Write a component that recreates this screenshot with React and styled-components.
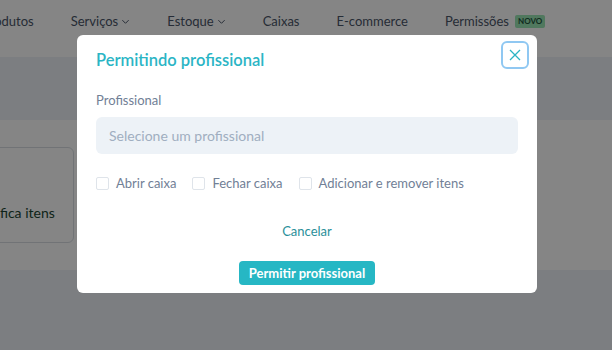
import React from 'react';
import styled, { createGlobalStyle } from 'styled-components';

const GlobalStyle = createGlobalStyle`
  html, body {
    margin: 0;
    padding: 0;
    height: 100%;
    overflow: hidden;
  }
  body {
    font-family: Lato, "Noto Sans", sans-serif;
    background: #ffffff;
  }
  #root {
    height: 100%;
  }
`;

const navItems = [
  { label: 'Produtos' },
  { label: 'Serviços', menu: true },
  { label: 'Estoque', menu: true },
  { label: 'Caixas' },
  { label: 'E-commerce' },
  { label: 'Permissões', badge: 'NOVO' },
];

const permissions = ['Abrir caixa', 'Fechar caixa', 'Adicionar e remover itens'];

export default function App() {
  return (
    <>
      <GlobalStyle />
      <Page>
        <Nav>
          <NavList>
            {navItems.map((item) => (
              <NavItem key={item.label}>
                {item.label}
                {item.menu && (
                  <svg width="9" height="9" viewBox="0 0 10 10" fill="none">
                    <path d="M1.5 3.5 5 7l3.5-3.5" stroke="currentColor" strokeWidth="1.1" />
                  </svg>
                )}
                {item.badge && <Badge>{item.badge}</Badge>}
              </NavItem>
            ))}
          </NavList>
        </Nav>
        <Band $height={63} />
        <Content>
          <Card>
            <CardText>Modifica itens</CardText>
          </Card>
        </Content>
        <Band $grow />
      </Page>

      <Overlay>
        <Modal>
          <Header>
            <Title>Permitindo profissional</Title>
            <CloseButton aria-label="Fechar">
              <svg width="12" height="12" viewBox="0 0 12 12" fill="none">
                <path d="M1 1l10 10M11 1 1 11" stroke="#2bb3c3" strokeWidth="1.3" />
              </svg>
            </CloseButton>
          </Header>

          <Label>Profissional</Label>
          <Select>Selecione um profissional</Select>

          <CheckRow>
            {permissions.map((p) => (
              <CheckItem key={p}>
                <Box />
                {p}
              </CheckItem>
            ))}
          </CheckRow>

          <Footer>
            <LinkButton>Cancelar</LinkButton>
            <PrimaryButton>Permitir profissional</PrimaryButton>
          </Footer>
        </Modal>
      </Overlay>
    </>
  );
}

const Page = styled.div`
  display: flex;
  flex-direction: column;
  height: 100%;
`;

const Nav = styled.nav`
  height: 57px;
  background: #ffffff;
  display: flex;
  align-items: flex-start;
  overflow: hidden;
`;

const NavList = styled.div`
  display: flex;
  gap: 37px;
  margin-left: -18px;
  padding-top: 12px;
`;

const NavItem = styled.div`
  display: flex;
  align-items: center;
  gap: 3px;
  font-size: 13px;
  color: #4a5568;
  white-space: nowrap;
  line-height: 18px;
`;

const Badge = styled.span`
  margin-left: 3px;
  background: #9ae6b4;
  color: #22543d;
  font-size: 8px;
  font-weight: 700;
  padding: 1px 3px;
  border-radius: 2px;
  line-height: 11px;
`;

const Band = styled.div`
  background: #edf2f7;
  height: ${(p) => (p.$height ? `${p.$height}px` : 'auto')};
  flex: ${(p) => (p.$grow ? 1 : 'none')};
`;

const Content = styled.div`
  height: 150px;
  background: #ffffff;
  padding-top: 27px;
  box-sizing: border-box;
`;

const Card = styled.div`
  margin-left: -60px;
  width: 134px;
  height: 96px;
  box-sizing: border-box;
  border: 1px solid #d9dde3;
  border-radius: 6px;
  display: flex;
  align-items: flex-end;
  padding: 0 0 21px 27px;
`;

const CardText = styled.span`
  font-size: 14px;
  color: #1c4532;
  white-space: nowrap;
`;

const Overlay = styled.div`
  position: fixed;
  inset: 0;
  background: rgba(0, 0, 0, 0.48);
  display: flex;
  justify-content: center;
  align-items: flex-start;
  padding: 35px 0 0 2px;
`;

const Modal = styled.div`
  width: 460px;
  box-sizing: border-box;
  background: #ffffff;
  border-radius: 6px;
  padding: 6px 8px 8px 19px;
  display: flex;
  flex-direction: column;
`;

const Header = styled.div`
  display: flex;
  justify-content: space-between;
  align-items: flex-start;
`;

const Title = styled.h2`
  margin: 7px 0 0;
  font-size: 16.5px;
  line-height: 24px;
  font-weight: 600;
  color: #2bb5c5;
`;

const CloseButton = styled.button`
  width: 28px;
  height: 28px;
  box-sizing: border-box;
  border: 2px solid #90c8f2;
  border-radius: 6px;
  background: #ffffff;
  display: flex;
  align-items: center;
  justify-content: center;
  padding: 0;
`;

const Label = styled.div`
  margin-top: 19px;
  font-size: 13px;
  line-height: 18px;
  color: #718096;
`;

const Select = styled.div`
  margin: 8px 11px 0 0;
  height: 37px;
  background: #edf2f7;
  border-radius: 6px;
  display: flex;
  align-items: center;
  padding-left: 13px;
  font-size: 14px;
  color: #a0aec0;
`;

const CheckRow = styled.div`
  display: flex;
  gap: 16px;
  margin-top: 20px;
`;

const CheckItem = styled.label`
  display: flex;
  align-items: center;
  gap: 7px;
  font-size: 13px;
  line-height: 18px;
  color: #718096;
`;

const Box = styled.span`
  width: 13px;
  height: 13px;
  box-sizing: border-box;
  border: 1.5px solid #dfe4ea;
  border-radius: 2px;
`;

const Footer = styled.div`
  display: flex;
  flex-direction: column;
  align-items: center;
  margin-right: 11px;
`;

const LinkButton = styled.button`
  margin-top: 30px;
  border: none;
  background: none;
  padding: 0;
  font-family: inherit;
  font-size: 13px;
  line-height: 18px;
  color: #2a8f9a;
`;

const PrimaryButton = styled.button`
  margin-top: 21px;
  height: 24px;
  padding: 0 10px;
  border: none;
  border-radius: 4px;
  background: #26b7c4;
  color: #ffffff;
  font-family: inherit;
  font-size: 13px;
  font-weight: 700;
`;
